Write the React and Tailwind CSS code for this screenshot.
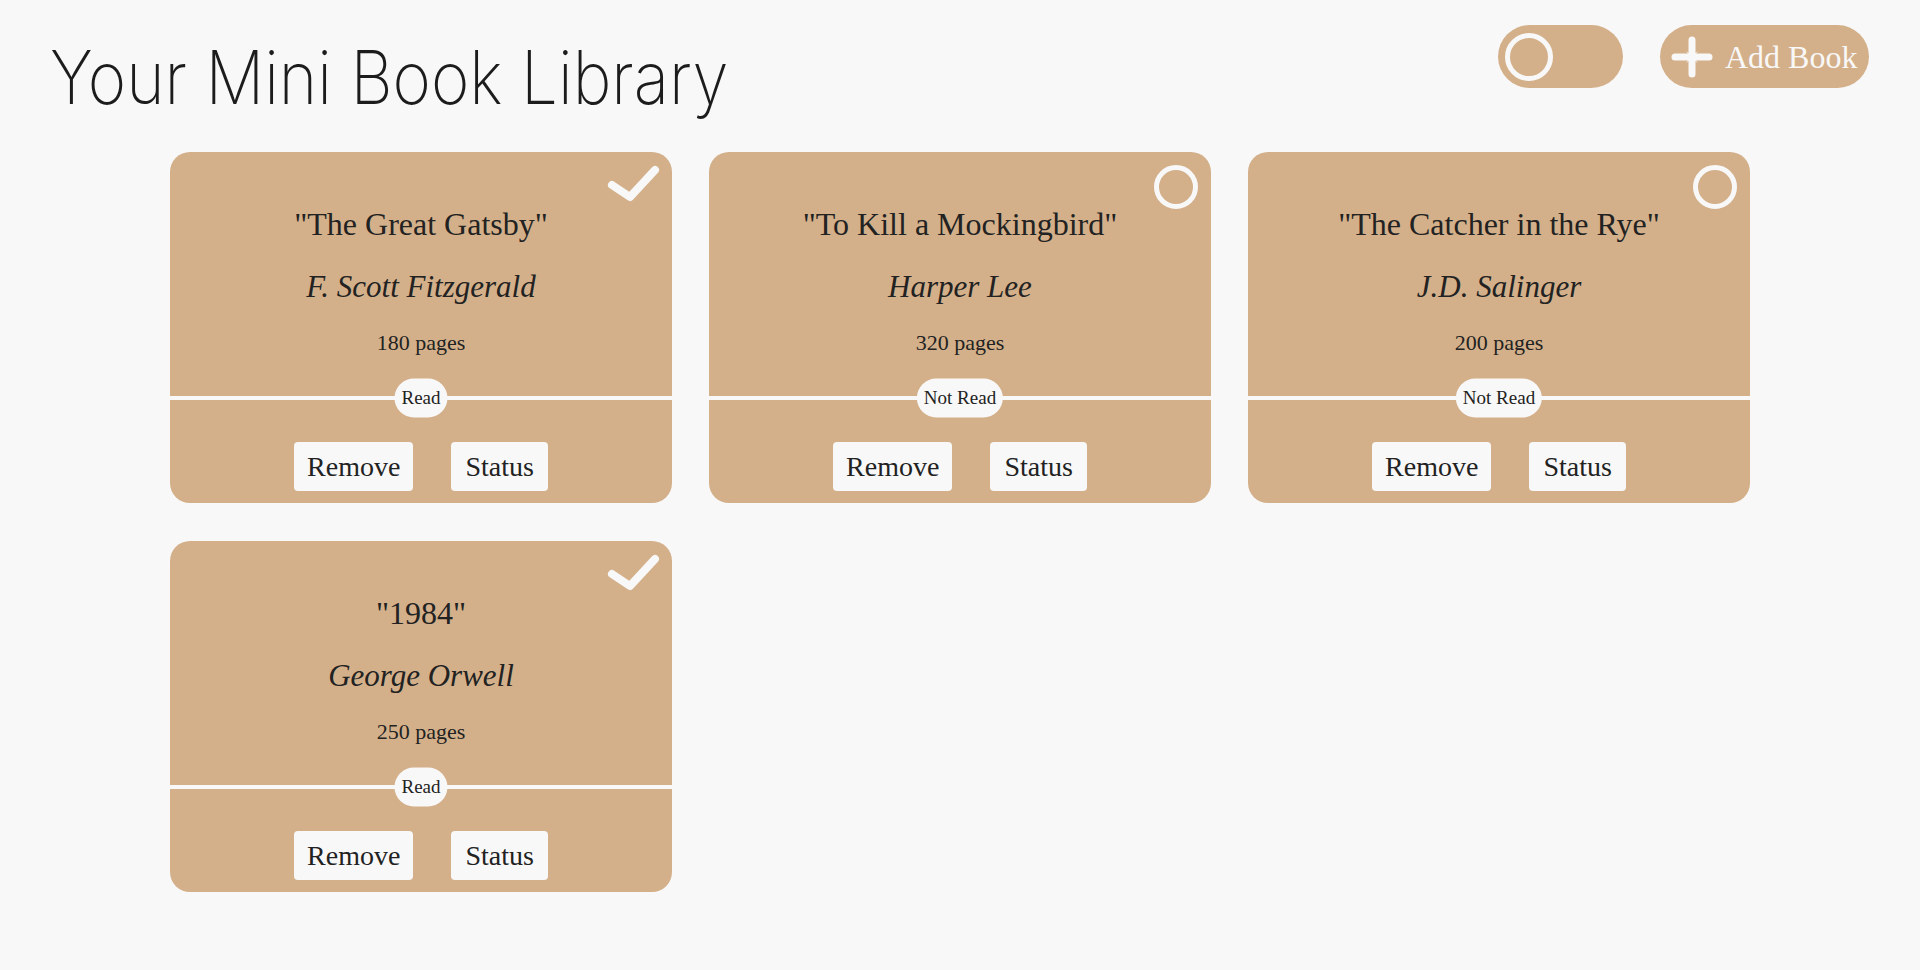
const books = [
  { title: "The Great Gatsby", author: "F. Scott Fitzgerald", pages: 180, read: true },
  { title: "To Kill a Mockingbird", author: "Harper Lee", pages: 320, read: false },
  { title: "The Catcher in the Rye", author: "J.D. Salinger", pages: 200, read: false },
  { title: "1984", author: "George Orwell", pages: 250, read: true },
];

function Check() {
  return (
    <svg width="56" height="44" viewBox="0 0 56 44" className="absolute top-[10px] right-[12px]">
      <polyline points="8,23 26,35 51,8" fill="none" stroke="#f8f8f8" strokeWidth="8" strokeLinecap="round" strokeLinejoin="round" />
    </svg>
  );
}

function Circle() {
  return <div className="absolute top-[13px] right-[13px] w-[44px] h-[44px] rounded-full border-[5px] border-[#f8f8f8]" />;
}

function Card({ b }) {
  return (
    <div className="relative flex flex-col bg-[#d4b08a] rounded-[20px] text-[#222] text-center">
      {b.read ? <Check /> : <Circle />}
      <div className="pt-[52px] flex flex-col items-center">
        <div className="text-[32px] leading-[40px]">"{b.title}"</div>
        <div className="mt-[23px] text-[31px] leading-[40px] italic">{b.author}</div>
        <div className="mt-[22px] text-[22px] leading-[28px]">{b.pages} pages</div>
      </div>
      <div className="relative mt-[39px] h-[4px] bg-[#f8f8f8]">
        <div className="absolute left-1/2 top-1/2 -translate-x-1/2 -translate-y-1/2 h-[39px] px-[7px] flex items-center rounded-full bg-[#f8f8f8] text-[19px] whitespace-nowrap">
          {b.read ? "Read" : "Not Read"}
        </div>
      </div>
      <div className="mt-[42px] mb-[12px] flex justify-center gap-[38px]">
        <button className="h-[49px] px-[13px] rounded-[4px] bg-[#f8f8f8] text-[28px] leading-none">Remove</button>
        <button className="h-[49px] px-[14px] rounded-[4px] bg-[#f8f8f8] text-[28px] leading-none">Status</button>
      </div>
    </div>
  );
}

export default function App() {
  return (
    <div className="min-h-[970px] w-full bg-[#f8f8f8] pt-[25px] font-['Liberation_Serif',serif]">
      <header className="flex justify-between items-start pl-[50px] pr-[51px]">
        <h1 className="mt-[15px] h-[74px] text-[74px] leading-[74px] font-extralight text-[#1c1c1c] font-['Inter',sans-serif] inline-block origin-left scale-x-[0.885] whitespace-nowrap">
          Your Mini Book Library
        </h1>
        <div className="flex items-center gap-[37px]">
          <div className="w-[125px] h-[63px] rounded-full bg-[#d4b08a] flex items-center pl-[7px]">
            <div className="w-[48px] h-[48px] rounded-full border-[5px] border-[#f8f8f8]" />
          </div>
          <button className="h-[63px] w-[209px] rounded-full bg-[#d4b08a] flex items-center pl-[10px] gap-[11px] text-[#f8f8f8] text-[32px] leading-none">
            <svg width="44" height="44" viewBox="0 0 44 44">
              <path d="M22 5 V39 M5 22 H39" stroke="#f8f8f8" strokeWidth="7" strokeLinecap="round" fill="none" />
              <path d="M16 16 Q22 22 28 16 Q22 22 28 28 Q22 22 16 28 Q22 22 16 16 Z" fill="#f8f8f8" />
            </svg>
            <span>Add Book</span>
          </button>
        </div>
      </header>
      <main className="mt-[38px] grid grid-cols-[repeat(3,502px)] gap-x-[37px] gap-y-[38px] justify-center">
        {books.map((b) => (
          <Card key={b.title} b={b} />
        ))}
      </main>
    </div>
  );
}
